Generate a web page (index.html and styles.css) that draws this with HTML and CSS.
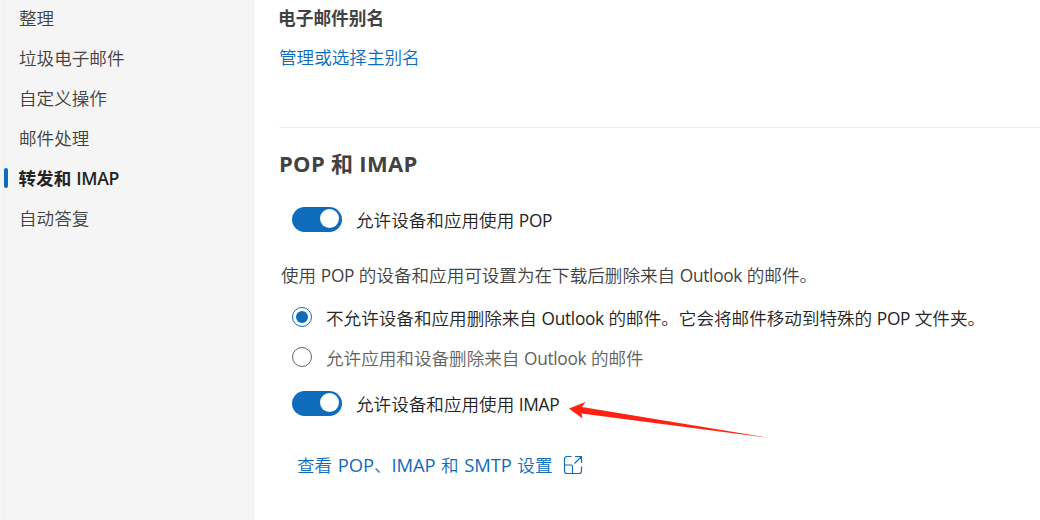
FILE: index.html
```html
<!DOCTYPE html>
<html lang="zh-CN">
<head>
<meta charset="utf-8">
<title>Outlook 设置</title>
<link rel="stylesheet" href="styles.css">
</head>
<body>
<div class="page">
  <nav class="sidebar">
    <a class="item">整理</a>
    <a class="item">垃圾电子邮件</a>
    <a class="item">自定义操作</a>
    <a class="item">邮件处理</a>
    <a class="item active">转发和 <span class="latin">IMAP</span></a>
    <a class="item">自动答复</a>
  </nav>
  <main class="content">
    <h3 class="subtitle">电子邮件别名</h3>
    <a class="link alias">管理或选择主别名</a>
    <section class="section">
      <h2 class="title">POP 和 IMAP</h2>
      <div class="row toggle-row">
        <span class="toggle"></span>
        <span class="label">允许设备和应用使用 <span class="latin">POP</span></span>
      </div>
      <p class="hint">使用 <span class="latin">POP</span> 的设备和应用可设置为在下载后删除来自 <span class="latin">Outlook</span> 的邮件。</p>
      <div class="row radio-row">
        <span class="radio checked"></span>
        <span class="label">不允许设备和应用删除来自 <span class="latin">Outlook</span> 的邮件。它会将邮件移动到特殊的 <span class="latin">POP</span> 文件夹。</span>
      </div>
      <div class="row radio-row muted">
        <span class="radio"></span>
        <span class="label">允许应用和设备删除来自 <span class="latin">Outlook</span> 的邮件</span>
      </div>
      <div class="row toggle-row imap">
        <span class="toggle"></span>
        <span class="label">允许设备和应用使用 <span class="latin">IMAP</span></span>
      </div>
      <a class="link more"><span>查看 <span class="latin">POP</span>、<span class="latin">IMAP</span> 和 <span class="latin">SMTP</span> 设置</span>
        <svg class="open" width="20" height="20" viewBox="0 0 20 20"><path d="M8.500 1.500H4Q1.500 1.500 1.500 4V16Q1.500 18.500 4 18.500H16Q18.500 18.500 18.500 16V11.500M1.500 10H8Q9.500 10 9.500 11.500V18.500M12 1.500H18.500V8M18 2L11.500 8.500"/></svg>
      </a>
    </section>
  </main>
  <svg class="arrow" width="202" height="38" viewBox="0 0 202 38"><path d="M0 8.500L16.500 2L13 7L200 37.800L12.500 13.500L13.500 18.500Z"/></svg>
</div>
</body>
</html>
```
FILE: styles.css
```css
* { box-sizing: border-box; }
body {
  margin: 0;
  background: #fff;
  color: #242424;
  font: 350 17.58px/40px "Noto Sans CJK SC", sans-serif;
}
.page {
  position: relative;
  display: flex;
  width: 1040px;
  height: 520px;
  overflow: hidden;
}
.latin {
  font-family: "Open Sans", "Noto Sans", sans-serif;
  font-weight: 400;
  font-size: 17.3px;
  line-height: 1;
  letter-spacing: -0.3px;
}
.sidebar {
  display: flex;
  flex-direction: column;
  width: 254px;
  padding-left: 3px;
  background: linear-gradient(90deg, #f5f5f5 3px, #eee 3px, #eee 4px, #f5f5f5 4px);
  border-right: 1px solid #eee;
}
.item {
  display: flex;
  align-items: center;
  height: 40px;
  padding-left: 16px;
  color: #424242;
  white-space: pre;
}
.item:first-child { margin-top: -2px; }
.active {
  padding-left: 0;
  color: #242424;
  font-weight: 700;
}
.active .latin {
  margin: 2px 0 0 1px;
  font-weight: 600;
  font-size: 17.6px;
}
.active::before {
  content: "";
  width: 4px;
  height: 20px;
  margin: 0 10.5px 0 1px;
  border-radius: 2px;
  background: #0f6cbd;
}
.content {
  flex: 1;
  padding-left: 25px;
  word-spacing: 0.7px;
}
.subtitle {
  margin: -3px 0 0 -1px;
  font-size: 17.7px;
  font-weight: 700;
  color: #424242;
}
.link { color: #0f6cbd; }
.alias { display: block; }
.section {
  margin-top: 50px;
  padding-top: 15px;
  border-top: 1px solid #ededed;
}
.title {
  margin: 0;
  color: #424242;
  font: 700 22px/40px "Open Sans", "Noto Sans CJK SC", sans-serif;
  letter-spacing: 0.3px;
  word-spacing: 0;
}
.row {
  display: flex;
  align-items: center;
  height: 40px;
  padding-left: 13px;
  white-space: nowrap;
}
.toggle-row { gap: 14px; margin-top: 16px; }
.toggle {
  display: flex;
  justify-content: flex-end;
  width: 50px;
  height: 25px;
  padding: 2px 3px 4px;
  border-radius: 13px;
  background: #0f6cbd;
}
.toggle::after {
  content: "";
  width: 19px;
  height: 19px;
  border-radius: 50%;
  background: #fff;
}
.hint {
  margin: 16px 0 2px 2px;
  color: #424242;
  white-space: nowrap;
}
.radio-row { gap: 14px; }
.label { padding-top: 2px; }
.radio {
  display: grid;
  place-items: center;
  width: 20px;
  height: 20px;
  border: 1px solid #616161;
  border-radius: 50%;
}
.checked { border-color: #0f6cbd; }
.checked::after {
  content: "";
  width: 12px;
  height: 12px;
  border-radius: 50%;
  background: #0f6cbd;
}
.muted { color: #616161; }
.imap { margin-top: 6px; }
.more {
  display: flex;
  align-items: center;
  gap: 10px;
  margin: 22px 0 0 18px;
  word-spacing: 1.7px;
}
.more .latin {
  font-size: 18.4px;
  letter-spacing: -0.1px;
}
.open {
  fill: none;
  stroke: #0f6cbd;
  stroke-width: 1.2;
}
.arrow {
  position: absolute;
  left: 569px;
  top: 400px;
  fill: #ff2213;
}
```
